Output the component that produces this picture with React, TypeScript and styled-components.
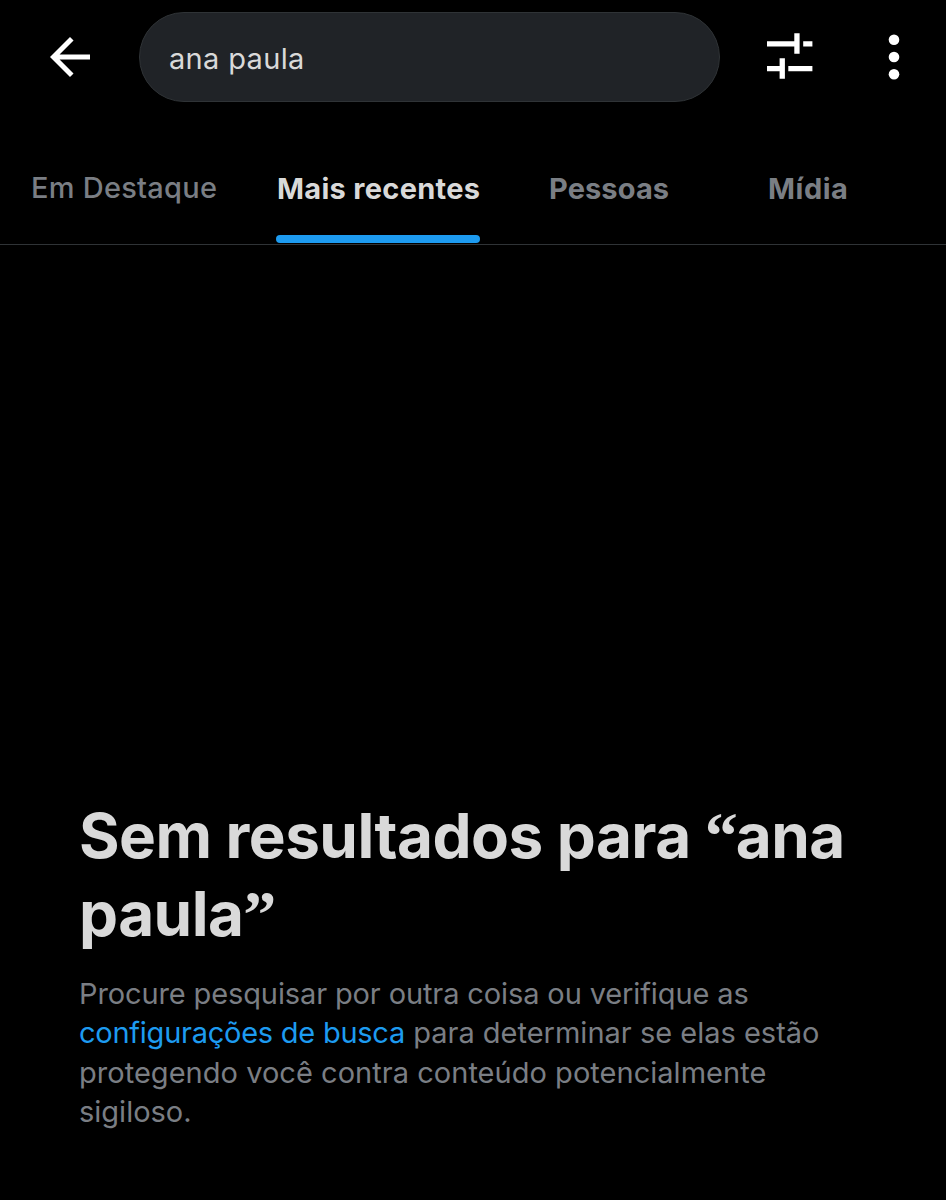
import React from 'react';
import styled, { createGlobalStyle } from 'styled-components';

const GlobalStyle = createGlobalStyle`
  *, *::before, *::after { box-sizing: border-box; }
  body {
    margin: 0;
    background: #000;
    font-family: Inter, 'Liberation Sans', sans-serif;
    -webkit-font-smoothing: antialiased;
  }
`;

const Screen = styled.main`
  display: flex;
  flex-direction: column;
  width: 946px;
  height: 1200px;
  overflow: hidden;
  background: #000;
  color: #d9d9d9;
`;

const TopBar = styled.header`
  display: flex;
  align-items: center;
  height: 114px;
  padding: 0 22px 0 40px;
`;

const IconButton = styled.button<{ $size: number }>`
  display: flex;
  flex: none;
  width: ${(p) => p.$size}px;
  height: ${(p) => p.$size}px;
  padding: 0;
  border: 0;
  background: none;
  color: #fff;

  svg {
    display: block;
    width: 100%;
    height: 100%;
    fill: currentColor;
  }
`;

const SearchField = styled.div`
  display: flex;
  align-items: center;
  width: 581px;
  height: 90px;
  margin: 0 40px 0 39px;
  padding: 3px 0 0 29px;
  border: 1px solid #2f3336;
  border-radius: 45px;
  background: #202327;
  font-size: 29px;
  letter-spacing: 0.33px;
`;

const Actions = styled.div`
  display: flex;
  flex: 1;
  justify-content: space-between;
  padding-left: 1px;
`;

const TabBar = styled.nav`
  display: flex;
  height: 131px;
  padding-left: 31px;
  border-bottom: 1px solid #2f3336;
`;

const Tab = styled.a<{ $width: number; $gap: number; $weight: number; $active?: boolean; $raise?: number; $track: number }>`
  display: flex;
  flex-direction: column;
  justify-content: flex-end;
  width: ${(p) => p.$width}px;
  margin-right: ${(p) => p.$gap}px;
  padding-bottom: ${(p) => p.$raise ?? 0}px;
  color: ${(p) => (p.$active ? '#d9d9d9' : '#7a7e84')};
  font-size: 29px;
  font-weight: ${(p) => p.$weight};
  line-height: 36px;
  letter-spacing: ${(p) => p.$track}px;
  white-space: nowrap;
`;

const TabLabel = styled.span<{ $inset?: number }>`
  padding-left: ${(p) => p.$inset ?? 0}px;
`;

const Indicator = styled.span<{ $active?: boolean }>`
  height: 8px;
  margin-top: 28px;
  margin-bottom: 1px;
  border-radius: 4px;
  background: ${(p) => (p.$active ? '#1d9bf0' : 'transparent')};
`;

const EmptyState = styled.section`
  display: flex;
  flex: 1;
  flex-direction: column;
  justify-content: flex-end;
  padding: 0 79px 68.5px;
`;

const Title = styled.h1`
  margin: 0 0 20.5px;
  font-size: 62px;
  font-weight: 650;
  line-height: 78px;
  letter-spacing: -0.55px;
`;

const TitleLine = styled.span`
  display: block;
  height: 78px;
  white-space: nowrap;
`;

const Quote = styled.span`
  font-family: 'Liberation Serif', 'Times New Roman', serif;
  font-size: 66px;
  font-weight: 700;
  line-height: 1;
  letter-spacing: -2px;
`;

const Description = styled.p`
  margin: 0;
  color: #7a7e84;
  font-size: 29px;
  line-height: 39.5px;
`;

const TextLine = styled.span<{ $track?: number }>`
  display: block;
  letter-spacing: ${(p) => p.$track ?? 0}px;
  white-space: nowrap;
`;

const SettingsLink = styled.a`
  color: #1d9bf0;
  letter-spacing: -0.25px;
`;

const tabs = [
  { label: 'Em Destaque', width: 187, gap: 58, weight: 500, raise: 1, track: 0.25 },
  { label: 'Mais recentes', width: 204, gap: 69, weight: 650, active: true, track: 0.3, inset: 1 },
  { label: 'Pessoas', width: 120, gap: 99, weight: 650, track: 0.1 },
  { label: 'Mídia', width: 81, gap: 0, weight: 650, track: 0.5 },
];

export default function App() {
  return (
    <Screen>
      <GlobalStyle />
      <TopBar>
        <IconButton $size={60} aria-label="Voltar">
          <svg viewBox="0 0 24 24">
            <path d="M20 11H7.83l5.59-5.59L12 4l-8 8 8 8 1.41-1.41L7.83 13H20z" />
          </svg>
        </IconButton>
        <SearchField>ana paula</SearchField>
        <Actions>
          <IconButton $size={60} aria-label="Filtros">
            <svg viewBox="0 0 60 60">
              <path d="M6 14.3h27.3v-8h5.3v20.4h-5.3v-7.2H6zM42.2 14.3h9.2v5.2h-9.2zM6 39h12.6v-7.7h5.3v20.5h-5.3v-7.6H6zM27.3 39h24.1v5.2H27.3z" />
            </svg>
          </IconButton>
          <IconButton $size={60} aria-label="Mais opções">
            <svg viewBox="0 0 60 60">
              <circle cx="30" cy="12.8" r="5.3" />
              <circle cx="30" cy="30" r="5.3" />
              <circle cx="30" cy="47.3" r="5.3" />
            </svg>
          </IconButton>
        </Actions>
      </TopBar>
      <TabBar>
        {tabs.map((t) => (
          <Tab
            key={t.label}
            $width={t.width}
            $gap={t.gap}
            $weight={t.weight}
            $active={t.active}
            $raise={t.raise}
            $track={t.track}
          >
            <TabLabel $inset={t.inset}>{t.label}</TabLabel>
            <Indicator $active={t.active} />
          </Tab>
        ))}
      </TabBar>
      <EmptyState>
        <Title>
          <TitleLine>
            Sem resultados para <Quote>“</Quote>ana
          </TitleLine>
          <TitleLine>
            paula<Quote>”</Quote>
          </TitleLine>
        </Title>
        <Description>
          <TextLine $track={-0.12}>Procure pesquisar por outra coisa ou verifique as</TextLine>
          <TextLine>
            <SettingsLink>configurações de busca</SettingsLink> para determinar se elas estão
          </TextLine>
          <TextLine $track={0.03}>protegendo você contra conteúdo potencialmente</TextLine>
          <TextLine>sigiloso.</TextLine>
        </Description>
      </EmptyState>
    </Screen>
  );
}
